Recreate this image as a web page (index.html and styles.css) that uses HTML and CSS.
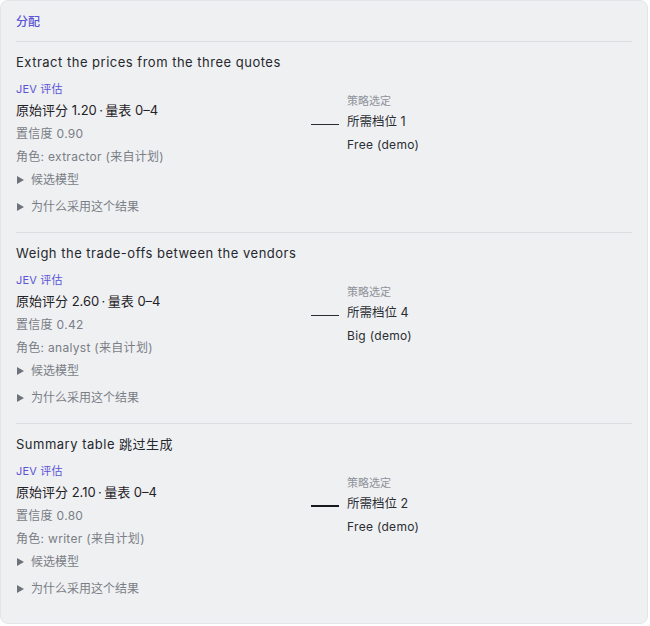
FILE: index.html
```html
<!DOCTYPE html>
<html lang="zh">
<head>
<meta charset="utf-8">
<link rel="stylesheet" href="styles.css">
</head>
<body>
<div class="card">
  <div class="header">分配</div>

  <div class="section">
    <div class="title">Extract the prices from the three quotes</div>
    <div class="row">
      <div class="left">
        <div class="jev">JEV 评估</div>
        <div class="score">原始评分 1.20&thinsp;·&thinsp;量表 0–4</div>
        <div class="muted">置信度 0.90</div>
        <div class="muted role">角色: extractor (来自计划)</div>
      </div>
      <div class="connector"></div>
      <div class="right">
        <div class="label">策略选定</div>
        <div class="tier">所需档位 1</div>
        <div class="model">Free (demo)</div>
      </div>
    </div>
    <div class="disclosure first">候选模型</div>
    <div class="disclosure second">为什么采用这个结果</div>
  </div>

  <div class="section">
    <div class="title">Weigh the trade-offs between the vendors</div>
    <div class="row">
      <div class="left">
        <div class="jev">JEV 评估</div>
        <div class="score">原始评分 2.60&thinsp;·&thinsp;量表 0–4</div>
        <div class="muted">置信度 0.42</div>
        <div class="muted role">角色: analyst (来自计划)</div>
      </div>
      <div class="connector"></div>
      <div class="right">
        <div class="label">策略选定</div>
        <div class="tier">所需档位 4</div>
        <div class="model">Big (demo)</div>
      </div>
    </div>
    <div class="disclosure first">候选模型</div>
    <div class="disclosure second">为什么采用这个结果</div>
  </div>

  <div class="section last">
    <div class="title">Summary table 跳过生成</div>
    <div class="row">
      <div class="left">
        <div class="jev">JEV 评估</div>
        <div class="score">原始评分 2.10&thinsp;·&thinsp;量表 0–4</div>
        <div class="muted">置信度 0.80</div>
        <div class="muted role">角色: writer (来自计划)</div>
      </div>
      <div class="connector strong"></div>
      <div class="right">
        <div class="label">策略选定</div>
        <div class="tier">所需档位 2</div>
        <div class="model">Free (demo)</div>
      </div>
    </div>
    <div class="disclosure first">候选模型</div>
    <div class="disclosure second">为什么采用这个结果</div>
  </div>
</div>
</body>
</html>
```

FILE: styles.css
```css
html, body {
  margin: 0;
  padding: 0;
  background: #ffffff;
}

body {
  font-family: Inter, "Noto Sans CJK SC", sans-serif;
  color: #1f2227;
}

.card {
  box-sizing: border-box;
  width: 648px;
  height: 624px;
  background: #eff0f2;
  border: 1px solid #e4e5e8;
  border-radius: 8px;
  padding: 0 15px;
}

.header {
  height: 40px;
  line-height: 42px;
  font-size: 12px;
  color: #5b55d6;
  font-weight: 500;
  border-bottom: 1px solid #dcdde1;
}

.section {
  padding: 10px 0 14px;
  border-bottom: 1px solid #dcdde1;
}

.section.last {
  border-bottom: none;
}

.title {
  font-size: 13px;
  line-height: 20px;
  letter-spacing: 0.5px;
  color: #25282d;
}

.row {
  display: flex;
  align-items: center;
  margin-top: 8px;
}

.left {
  width: 295px;
}

.jev {
  font-size: 11px;
  line-height: 18px;
  letter-spacing: 0.2px;
  color: #5b55d6;
}

.score {
  font-size: 13px;
  line-height: 24px;
  color: #1f2227;
}

.muted {
  font-size: 12px;
  line-height: 23px;
  letter-spacing: 0.3px;
  color: #7a7e86;
}

.connector {
  width: 28px;
  height: 1px;
  background: #2a2d33;
  margin-right: 8px;
}

.connector.strong {
  height: 2px;
  background: #15171b;
}

.right {
  display: flex;
  flex-direction: column;
}

.label {
  font-size: 11px;
  line-height: 20px;
  color: #8e929a;
}

.tier {
  font-size: 12.5px;
  line-height: 22px;
  color: #2a2d33;
}

.model {
  font-size: 12px;
  line-height: 24px;
  letter-spacing: 0.3px;
  color: #2a2d33;
}

.disclosure {
  display: flex;
  align-items: center;
  font-size: 12px;
  line-height: 22px;
  color: #7a7e86;
}

.disclosure::before {
  content: "";
  width: 0;
  height: 0;
  border-left: 7px solid #6e727a;
  border-top: 4px solid transparent;
  border-bottom: 4px solid transparent;
  margin-right: 7px;
  margin-left: 1px;
}

.disclosure.first {
  margin-top: 1px;
}

.disclosure.second {
  margin-top: 5px;
}
```
